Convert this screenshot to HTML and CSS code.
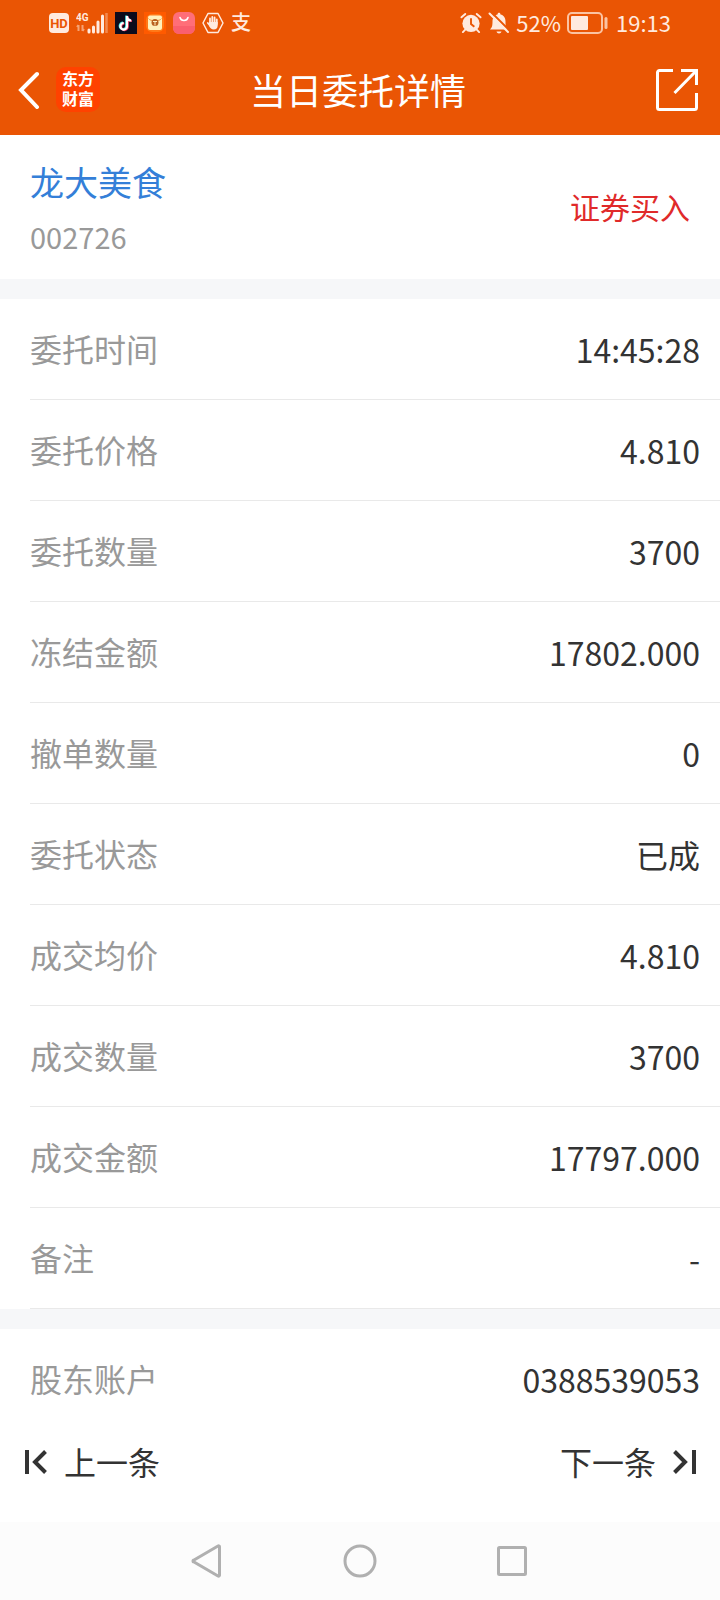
FILE: index.html
```html
<!DOCTYPE html>
<html lang="zh-CN">
<head>
    <meta charset="UTF-8">
    <meta name="viewport" content="width=device-width, initial-scale=1.0">
    <title>当日委托详情</title>
    <link rel="stylesheet" href="styles.css">
</head>
<body>
    <div class="status-bar">
        <div class="status-group apps">
            <svg width="20" height="20" viewBox="0 0 20 20">
                <rect width="20" height="20" rx="4" fill="#ffeadf"/>
                <text class="hd-text" x="10" y="15" text-anchor="middle">HD</text>
            </svg>
            <svg width="32" height="22" viewBox="0 0 32 22">
                <text class="net-text" x="0" y="9">4G</text>
                <path d="M2.500 19v-6M1 15l1.500-2M6.500 13v6M8 17l-1.500 2" stroke="#f5a375" stroke-width="2" fill="none"/>
                <path d="M13 20v-2M17.500 20v-5M22 20v-10M26.500 20V4" stroke="#ffeadf" stroke-width="3" stroke-linecap="round"/>
                <path d="M30.500 21V1" stroke="#f28a50" stroke-width="2.500"/>
            </svg>
            <!-- short video -->
            <svg width="22" height="22" viewBox="0 0 22 22">
                <rect width="22" height="22" fill="#0c0b1c"/>
                <g fill="none" stroke-width="2.200">
                    <path d="M11.300 3.500V14a3.300 3.300 0 1 1-3.300-3.500M11.300 3.500c0 3 1.500 4.500 4.200 4.500" stroke="#3de6e6"/>
                    <path d="M12.700 4.500V15a3.300 3.300 0 1 1-3.300-3.500M12.700 4.500c0 3 1.500 4.500 4.200 4.500" stroke="#f43b61"/>
                    <path d="M12 4v10.500a3.300 3.300 0 1 1-3.300-3.500M12 4c0 3 1.500 4.500 4.200 4.500" stroke="#fff"/>
                </g>
            </svg>
            <!-- shopping -->
            <svg width="22" height="22" viewBox="0 0 22 22">
                <rect width="22" height="22" fill="#ff5a00"/>
                <rect x="2" y="2" width="18" height="18" rx="6" fill="#ff7918"/>
                <rect x="4" y="3.500" width="14" height="14.500" rx="2" fill="#fff0bd"/>
                <path d="M4.500 6.500c1.500 2 3 2 6.500 2s5 0 6.500-2" stroke="#ed963f" fill="none"/>
                <circle cx="11" cy="10.500" r="3.500" fill="#b96020"/>
                <path d="M9 9.500h4M11 9.500v4" stroke="#fff0bd"/>
            </svg>
            <!-- app gallery -->
            <svg width="22" height="22" viewBox="0 0 22 22">
                <rect width="22" height="22" rx="6" fill="#ff6e78"/>
                <path d="M0 14h22v2a6 6 0 0 1-6 6H6a6 6 0 0 1-6-6z" fill="#fa5f6e"/>
                <path d="M7 5.500c1 4 7 4 8 0" stroke="#fff" stroke-width="1.500" fill="none" stroke-linecap="round"/>
            </svg>
            <!-- blocked notifications -->
            <svg width="22" height="22" viewBox="0 0 22 22">
                <path d="M6 1.500h10l5 9.500-5 9.500H6L1 11z" stroke="#ffeadf" stroke-width="1.500" fill="none" stroke-linejoin="round"/>
                <path d="M8 11V6.500M10.300 11V5M12.600 11V5.500M14.800 12V7.500M5.800 11l2.500 3" stroke="#ffeadf" stroke-width="1.800" stroke-linecap="round"/>
                <path d="M7.200 10h8.500v3.500c0 2.500-1.500 4-4 4-2.200 0-3.700-1.500-4.500-3.500z" fill="#ffeadf"/>
            </svg>
            <span class="pay-mark">支</span>
        </div>
        <div class="status-group">
            <svg width="22" height="22" viewBox="0 0 23 22">
                <circle cx="11.500" cy="11.500" r="9" fill="#ffeadf"/>
                <path d="M1.500 5l4-3.500M21.500 5l-4-3.500M5.500 18l-2.500 2.500M17.500 18l2.500 2.500" stroke="#ffeadf" stroke-width="2" stroke-linecap="round"/>
                <path d="M11.500 6v6l3.500 3" stroke="#ea5504" stroke-width="2" fill="none"/>
            </svg>
            <svg width="22" height="22" viewBox="0 0 22 22">
                <path d="M2 17.500c2-2 2.500-3.500 2.500-8C4.500 5.500 7 3 9.500 2.500 9.500 0 12.500 0 12.500 2.500c3 .5 5 3 5 7 0 4.500.5 6 2.500 8z" fill="#ffeadf"/>
                <path d="M8.500 19.500h5c-.5 2.500-4.500 2.500-5 0z" fill="#ffeadf"/>
                <path d="M3 0l19 19" stroke="#ea5504" stroke-width="2"/>
                <path d="M1.500 1.500l18.500 18.500" stroke="#ffeadf" stroke-width="2" stroke-linecap="round"/>
            </svg>
            <span>52%</span>
            <svg class="battery" width="41" height="22" viewBox="0 0 41 22">
                <rect x="1" y="1" width="34" height="20" rx="4" stroke="#fbc3a2" stroke-width="2" fill="none"/>
                <rect x="4" y="4" width="17" height="14" rx="1" fill="#ffeadf"/>
                <path d="M39 6.500v9" stroke="#fbc3a2" stroke-width="3" stroke-linecap="round"/>
            </svg>
            <span>19:13</span>
        </div>
    </div>

    <header class="header">
        <div class="header-left">
            <button class="icon-btn" aria-label="返回">
                <svg width="22" height="38" viewBox="0 0 22 38">
                    <path d="M19 3L3 19l16 17" stroke="#fff" stroke-width="4" fill="none" stroke-linecap="round"/>
                </svg>
            </button>
            <div class="logo">东方<br>财富</div>
        </div>
        <h1>当日委托详情</h1>
        <button class="icon-btn share" aria-label="分享">
            <svg width="42" height="42" viewBox="0 0 42 42">
                <path d="M17 1.500H3.500a2 2 0 0 0-2 2v35a2 2 0 0 0 2 2h35a2 2 0 0 0 2-2V24M25 1.500h15.500V16M40 2L18.500 24" stroke="#fff" stroke-width="3" fill="none"/>
            </svg>
        </button>
    </header>

    <main>
        <section class="stock">
            <div class="stock-info">
                <a class="stock-name" href="#">龙大美食</a>
                <p class="stock-code">002726</p>
            </div>
            <span class="side">证券买入</span>
        </section>

        <dl class="details">
            <div class="row"><dt>委托时间</dt><dd>14:45:28</dd></div>
            <div class="row"><dt>委托价格</dt><dd>4.810</dd></div>
            <div class="row"><dt>委托数量</dt><dd>3700</dd></div>
            <div class="row"><dt>冻结金额</dt><dd>17802.000</dd></div>
            <div class="row"><dt>撤单数量</dt><dd>0</dd></div>
            <div class="row"><dt>委托状态</dt><dd>已成</dd></div>
            <div class="row"><dt>成交均价</dt><dd>4.810</dd></div>
            <div class="row"><dt>成交数量</dt><dd>3700</dd></div>
            <div class="row"><dt>成交金额</dt><dd>17797.000</dd></div>
            <div class="row"><dt>备注</dt><dd>-</dd></div>
        </dl>

        <dl class="details account">
            <div class="row"><dt>股东账户</dt><dd>0388539053</dd></div>
        </dl>
    </main>

    <div class="pager">
        <button>
            <svg width="24" height="24" viewBox="0 0 24 24">
                <path d="M3 0v24M21.500 1.500L11 12l10.500 10.500" stroke="#333" stroke-width="4" fill="none"/>
            </svg>
            <span>上一条</span>
        </button>
        <button>
            <span>下一条</span>
            <svg width="24" height="24" viewBox="0 0 24 24">
                <path d="M22 0v24M2.500 1.500L13 12 2.500 22.500" stroke="#333" stroke-width="4" fill="none"/>
            </svg>
        </button>
    </div>

    <nav class="system-nav">
        <button class="icon-btn" aria-label="后退">
            <svg width="34" height="34" viewBox="0 0 34 34">
                <path d="M28.500 3v28a1 1 0 0 1-1.500 1L3 18a1 1 0 0 1 0-2L27 2a1 1 0 0 1 1.500 1z" stroke="#b0b0b0" stroke-width="3" fill="none"/>
            </svg>
        </button>
        <button class="icon-btn" aria-label="主页">
            <svg width="34" height="34" viewBox="0 0 34 34">
                <circle cx="17" cy="17" r="15" stroke="#b0b0b0" stroke-width="3" fill="none"/>
            </svg>
        </button>
        <button class="icon-btn" aria-label="最近任务">
            <svg width="34" height="34" viewBox="0 0 34 34">
                <rect x="3.500" y="3.500" width="27" height="27" rx="1" stroke="#b0b0b0" stroke-width="3" fill="none"/>
            </svg>
        </button>
    </nav>
</body>
</html>
```
FILE: styles.css
```css
* {
    box-sizing: border-box;
    margin: 0;
    padding: 0;
}
body {
    display: flex;
    flex-direction: column;
    min-height: 100vh;
    font-family: "Noto Sans CJK SC", sans-serif;
    font-size: 32px;
    line-height: 40px;
    color: #333;
    background-color: #fff;
}
svg {
    display: block;
    flex: none;
}
button {
    font: inherit;
    color: inherit;
    background: none;
    border: none;
    cursor: pointer;
}

/* Status bar */
.status-bar {
    display: flex;
    justify-content: space-between;
    align-items: center;
    height: 46px;
    padding: 0 49px;
    font-size: 22px;
    line-height: 24px;
    color: #ffeadf;
    background-color: #ea5504;
}
.status-group {
    display: flex;
    align-items: center;
    gap: 6px;
}
.apps {
    gap: 7px;
}
.hd-text {
    font-family: Roboto, sans-serif;
    font-size: 13px;
    font-weight: 700;
    fill: #ea5504;
}
.net-text {
    font-family: Roboto, sans-serif;
    font-size: 10px;
    font-weight: 700;
    fill: #ffeadf;
}
.pay-mark {
    font-size: 20px;
    font-weight: 500;
}
.status-bar span {
    padding-bottom: 2px;
}
.battery {
    margin-right: 2px;
}

/* Header */
.header {
    display: grid;
    grid-template-columns: 1fr auto 1fr;
    align-items: center;
    height: 89px;
    padding: 0 22px 2px 18px;
    color: #fff;
    background-color: #ea5504;
}
.header-left {
    display: flex;
    align-items: center;
    gap: 16px;
}
.header h1 {
    padding-bottom: 2px;
    font-size: 36px;
    font-weight: 400;
}
.share {
    justify-self: end;
}
.logo {
    padding: 1px 6px 4px;
    font-size: 16px;
    font-weight: 700;
    line-height: 20px;
    border-radius: 10px;
    background-color: #ff4200;
}

/* Stock summary */
.stock {
    display: flex;
    justify-content: space-between;
    align-items: center;
    height: 144px;
    padding: 0 30px;
}
.stock-info {
    padding-top: 4px;
}
.stock-name {
    display: block;
    margin-bottom: 14px;
    font-size: 34px;
    color: #347fd8;
    text-decoration: none;
}
.stock-code {
    font-size: 29px;
    color: #999;
}
.side {
    padding-bottom: 2px;
    font-size: 30px;
    color: #e02a2a;
}

/* Detail rows */
.details {
    border-top: 20px solid #f6f7f9;
}
.row {
    display: flex;
    justify-content: space-between;
    align-items: center;
    height: 101px;
    margin-left: 30px;
    padding-right: 20px;
    border-bottom: 1px solid #e9e9e9;
}
.row dt {
    padding-bottom: 2px;
    color: #999;
}
.account .row {
    padding-bottom: 2px;
    border-bottom: none;
}

/* Previous / next */
.pager {
    display: flex;
    justify-content: space-between;
    flex: 1;
    align-items: flex-start;
    padding: 11px 24px;
}
.pager button {
    display: flex;
    align-items: center;
    gap: 16px;
}
.pager span {
    padding-bottom: 2px;
}

.system-nav {
    display: flex;
    justify-content: center;
    align-items: center;
    gap: 118px;
    height: 78px;
    background-color: #fcfcfc;
}
```
